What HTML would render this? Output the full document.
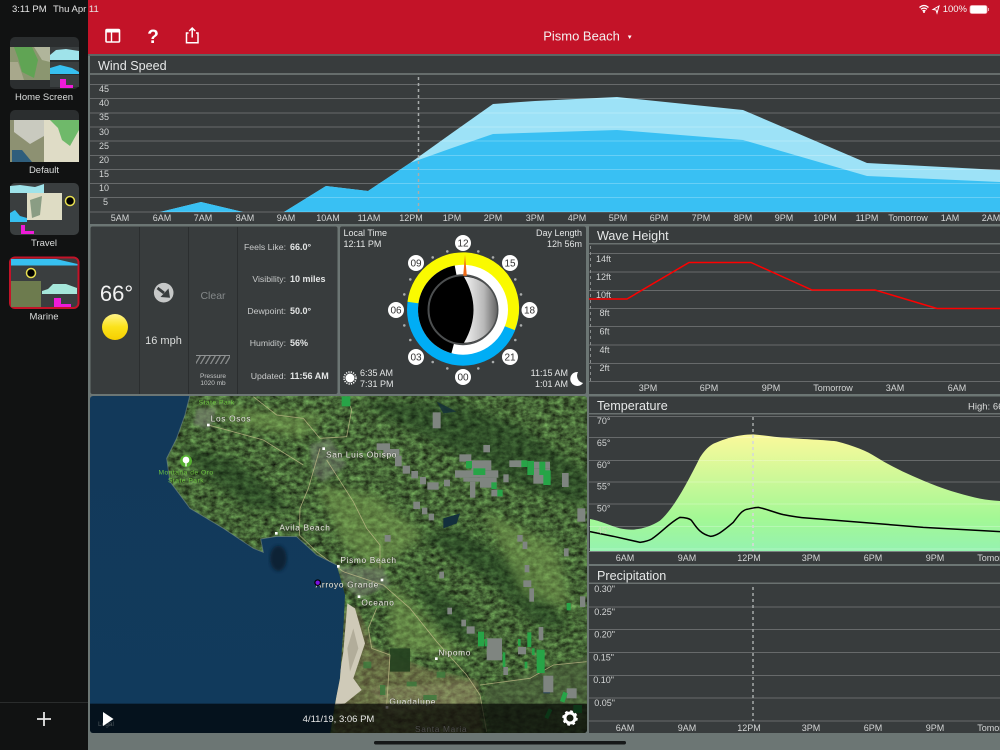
<!DOCTYPE html>
<html><head><meta charset="utf-8"><title>Marine</title>
<style>
html,body{margin:0;padding:0;background:#6c7674;width:1000px;height:750px;overflow:hidden}
svg{display:block}
text{font-family:"Liberation Sans",sans-serif;fill:#dcdedd}
.ax{font-size:9px;text-anchor:middle;fill:#d4d6d6}
.yl{font-size:9px;text-anchor:end;fill:#d4d6d6}
.tt{font-size:12.6px;fill:#e6e8e8}
.g{stroke:#fff;stroke-opacity:.24;stroke-width:1;fill:none}
.lb{font-size:8.7px;text-anchor:end;fill:#c8caca}
.vl{font-size:9px;font-weight:bold;fill:#e4e6e6}
.num{font-size:10px;text-anchor:middle;fill:#333}
.sm{font-size:9px;fill:#e4e6e6}
.mp{font-size:25px;fill:#e8e8e0;letter-spacing:2px;paint-order:stroke;stroke:#3a3f34;stroke-width:3px;stroke-opacity:.45}
</style></head><body>
<svg width="1000" height="750" viewBox="0 0 1000 750" xmlns="http://www.w3.org/2000/svg">
<defs>
<linearGradient id="tg" x1="0" y1="0" x2="0" y2="1"><stop offset="0" stop-color="#fbf99b"/><stop offset=".72" stop-color="#a3f895"/><stop offset="1" stop-color="#95f2b0"/></linearGradient>
<linearGradient id="sea" x1="0" y1="0" x2="0" y2="1"><stop offset="0" stop-color="#12395a"/><stop offset="1" stop-color="#113a5c"/></linearGradient>
<linearGradient id="moon" x1="0" y1="0" x2="1" y2="0"><stop offset="0" stop-color="#f2f2f2"/><stop offset=".6" stop-color="#b8b8b8"/><stop offset="1" stop-color="#666"/></linearGradient>
<linearGradient id="sun" x1="0" y1="0" x2="0" y2="1"><stop offset="0" stop-color="#fff48a"/><stop offset=".5" stop-color="#fbe21a"/><stop offset="1" stop-color="#f6cf00"/></linearGradient>
<filter id="terrain" x="0" y="0" width="100%" height="100%" color-interpolation-filters="sRGB">
<feTurbulence type="fractalNoise" baseFrequency=".05 .07" numOctaves="4" seed="8"/>
<feColorMatrix type="matrix" values=".5 0 0 0 .02  .75 0 0 0 .02  .4 0 0 0 .01  0 0 0 0 1"/>
</filter>
<filter id="b8"><feGaussianBlur stdDeviation="14"/></filter>
<filter id="b3"><feGaussianBlur stdDeviation="5"/></filter>
<filter id="b1"><feGaussianBlur stdDeviation="1"/></filter>
<clipPath id="land"><path d="M300 0L285 60L260 130L230 190L240 260L300 340L400 400L490 460L520 472L512 432L560 424L620 425L680 480L740 510L765 600L760 700L750 850L735 925L720 1020L1500 1020L1500 0Z"/></clipPath>
<clipPath id="farm"><path d="M800 640L850 760L1000 820L1160 860L1180 1020H730L750 850L770 640Z"/></clipPath>
<clipPath id="mapc"><rect x="0" y="0" width="497" height="337" rx="3"/></clipPath>
<pattern id="hatch" width="5" height="8" patternUnits="userSpaceOnUse" patternTransform="skewX(-30)"><rect width="1.4" height="8" fill="#8d9090"/></pattern>
</defs>

<!-- sidebar -->
<rect x="0" y="0" width="88" height="750" fill="#111212"/>
<rect x="88" y="0" width="912" height="54" fill="#c31328"/>
<rect x="88" y="54" width="912" height="2" fill="#5d6664"/>
<text x="12" y="12" style="font-size:9.5px;fill:#e6e6e6">3:11 PM</text>
<text x="53" y="12" style="font-size:9.5px;fill:#e6e6e6">Thu Apr 11</text>
<text x="967" y="12" text-anchor="end" style="font-size:9.5px;fill:#f5f5f5">100%</text>
<path d="M919.5 7.5Q924 3.5 928.5 7.5M921 9.3Q924 6.8 927 9.3M922.5 11Q924 9.8 925.5 11" stroke="#fff" stroke-width="1.3" fill="none"/><circle cx="924" cy="12" r="1" fill="#fff"/>
<path d="M939 6L933 9.5L936 10L937 13Z" fill="none" stroke="#fff" stroke-width="1"/>
<rect x="970" y="5.5" width="17" height="8" rx="2" fill="#fff" stroke="#f3b5bd" stroke-width=".8"/><rect x="988" y="8" width="1" height="3" fill="#e7a3ab"/>

<!-- header icons -->
<rect x="106" y="29.5" width="13.5" height="12.5" rx="1" fill="none" stroke="#fff" stroke-width="1.6"/><rect x="106" y="29.5" width="13.5" height="3" fill="#fff"/><path d="M111.5 30V42" stroke="#fff" stroke-width="1.4"/>
<text x="153" y="43" text-anchor="middle" style="font-size:19px;font-weight:bold;fill:#fff">?</text>
<path d="M188.5 33H186.5V42.8H198V33H196M192.2 37.5V28.5M189.2 31L192.2 28L195.2 31" fill="none" stroke="#fff" stroke-width="1.5"/>
<text x="581.500" y="40.500" text-anchor="middle" style="font-size:13px;fill:#f4f0f0">Pismo Beach</text>
<path d="M627.8 35.5H631.6L629.7 39Z" fill="#fff"/>

<!-- thumbnails -->
<g>
<rect x="10" y="37" width="69" height="52" rx="5" fill="#2b2e2f"/>
<rect x="10" y="47" width="40" height="33" fill="#8b9670"/>
<path d="M14 47L32 47L38 60L34 78L22 72L18 58Z" fill="#55a84d" opacity=".8"/><path d="M10 62L18 62L24 80H10Z" fill="#a8a88c"/><path d="M34 47H50V62L42 60Z" fill="#b0b59b"/>
<rect x="50" y="47" width="29" height="13" fill="#3a3f40"/><path d="M50 60V55L56 50L66 49L79 51V60Z" fill="#9fe3ea"/>
<rect x="50" y="62" width="29" height="12" fill="#3a3f40"/><path d="M50 74V68L60 65L72 68L79 72V74Z" fill="#37c0f0"/>
<rect x="50" y="75" width="29" height="12" fill="#3a3f40"/>
<rect x="60" y="79" width="6" height="9" fill="#ee1bd8"/><rect x="66" y="85" width="7" height="3" fill="#ee1bd8"/>
<text x="44" y="100" text-anchor="middle" style="font-size:9.5px">Home Screen</text>

<rect x="10" y="110" width="69" height="52" rx="5" fill="#2b2e2f"/>
<rect x="10" y="120" width="34" height="42" fill="#8d9172"/><path d="M14 120H44V136L30 144L14 132Z" fill="#c9cabf"/><path d="M12 150L22 150L32 162H12Z" fill="#2f5e7c"/>
<rect x="44" y="120" width="35" height="42" fill="#dfdcc6"/><path d="M50 120H79V130L70 146L62 140L58 128Z" fill="#6fb96a"/>
<text x="44" y="173" text-anchor="middle" style="font-size:9.5px">Default</text>

<rect x="10" y="183" width="69" height="52" rx="5" fill="#3a3e3f"/>
<path d="M10 186L20 185L35 187L44 184V193H10Z" fill="#9fe3ea"/>
<rect x="27" y="193" width="35" height="27" fill="#dedcc4"/><path d="M30 200L42 196L40 215L32 218Z" fill="#8a9d84"/>
<circle cx="70" cy="201" r="4.500" fill="#000" stroke="#e7df50" stroke-width="1.500"/>
<path d="M10 222V213L15 210L20 216L27 218V222Z" fill="#37c0f0"/>
<rect x="21" y="225" width="4" height="9" fill="#ee1bd8"/><rect x="25" y="231" width="9" height="3" fill="#ee1bd8"/>
<text x="44" y="246" text-anchor="middle" style="font-size:9.5px">Travel</text>

<rect x="10" y="257.500" width="68.500" height="50.500" rx="5" fill="#3a3e3f" stroke="#c31328" stroke-width="2"/>
<path d="M11 259H56L77.500 264V265.500H11Z" fill="#37c0f0"/>
<rect x="11" y="281" width="30" height="26" fill="#6d7b4e"/><circle cx="31" cy="273" r="4.500" fill="#000" stroke="#e7df50" stroke-width="1.500"/>
<path d="M42 294V291L48 289L53 284L66 284L77 288V294Z" fill="#a5e7da"/>
<rect x="54" y="298" width="7" height="9" fill="#ee1bd8"/><rect x="61" y="304" width="10" height="3" fill="#ee1bd8"/>
<text x="44" y="319.500" text-anchor="middle" style="font-size:9.5px">Marine</text>
</g>
<path d="M0 702.500H88" stroke="#2a2c2c"/>
<path d="M37 719H51M44 712V726" stroke="#e6e6e6" stroke-width="1.8"/>

<!-- wind panel -->
<rect x="90" y="56" width="910" height="168" fill="#383c3d"/>
<rect x="90" y="73" width="910" height="2" fill="#666d6c"/>
<text x="98" y="70" class="tt">Wind Speed</text>
<path d="M160 212L201 202L243 212ZM284 212L326 186L368 191L410 163L452 133L493 104L535 101L617 97L743 110L867 163L1000 170V212Z" fill="#9de2f7"/>
<path d="M160 212L201 202L243 212ZM284 212L326 186L368 191L410 163L452 148L493 134L617 130L743 140L867 176L1000 182V212Z" fill="#39c0f3"/>
<path class="g" d="M90 84.500H1000M90 98.500H1000M90 113H1000M90 127H1000M90 141H1000M90 155.500H1000M90 169.500H1000M90 183.500H1000M90 197.500H1000M90 212H1000" />
<path d="M418.500 77V212" stroke="#a8acac" stroke-width="1.500" stroke-dasharray="3 3"/>
<text x="109" y="92" class="yl">45</text><text x="109" y="106" class="yl">40</text><text x="109" y="120" class="yl">35</text><text x="109" y="135" class="yl">30</text><text x="109" y="149" class="yl">25</text><text x="109" y="163" class="yl">20</text><text x="109" y="177" class="yl">15</text><text x="109" y="191" class="yl">10</text><text x="108" y="205" class="yl">5</text>
<text class="ax" x="120" y="221">5AM</text><text class="ax" x="162" y="221">6AM</text><text class="ax" x="203" y="221">7AM</text><text class="ax" x="245" y="221">8AM</text><text class="ax" x="286" y="221">9AM</text><text class="ax" x="328" y="221">10AM</text><text class="ax" x="369" y="221">11AM</text><text class="ax" x="411" y="221">12PM</text><text class="ax" x="452" y="221">1PM</text><text class="ax" x="493" y="221">2PM</text><text class="ax" x="535" y="221">3PM</text><text class="ax" x="577" y="221">4PM</text><text class="ax" x="618" y="221">5PM</text><text class="ax" x="659" y="221">6PM</text><text class="ax" x="701" y="221">7PM</text><text class="ax" x="743" y="221">8PM</text><text class="ax" x="784" y="221">9PM</text><text class="ax" x="825" y="221">10PM</text><text class="ax" x="867" y="221">11PM</text><text class="ax" x="908" y="221">Tomorrow</text><text class="ax" x="950" y="221">1AM</text><text class="ax" x="991" y="221">2AM</text>

<!-- current conditions -->
<rect x="90.500" y="226.500" width="247" height="167.500" rx="2" fill="#383c3d"/>
<path d="M139.500 227V394M188.500 227V394M237.500 227V394" stroke="#2b2e2f"/>
<text x="116.500" y="301" text-anchor="middle" style="font-size:22px;fill:#f2f2f2">66°</text>
<circle cx="115" cy="327" r="13" fill="url(#sun)"/>
<circle cx="163.700" cy="292.700" r="9.800" fill="#c6c8c8"/>
<path d="M157.500 288L164 293" stroke="#383c3d" stroke-width="2.800"/>
<path d="M170 297.800L160.500 297L168.500 288.500Z" fill="#383c3d"/>
<text x="163.500" y="344" text-anchor="middle" style="font-size:11px">16 mph</text>
<text x="213" y="299" text-anchor="middle" style="font-size:10.500px;fill:#85898a">Clear</text>
<rect x="196" y="355" width="34" height="1" fill="#909393"/>
<rect x="196" y="356" width="34" height="8" fill="url(#hatch)"/>
<text x="213" y="378" text-anchor="middle" style="font-size:6.500px;fill:#c4c6c6">Pressure</text>
<text x="213" y="385" text-anchor="middle" style="font-size:6.500px;fill:#c4c6c6">1020 mb</text>
<text class="lb" x="286" y="250">Feels Like:</text><text class="vl" x="290" y="250">66.0°</text>
<text class="lb" x="286" y="282">Visibility:</text><text class="vl" x="290" y="282">10 miles</text>
<text class="lb" x="286" y="314">Dewpoint:</text><text class="vl" x="290" y="314">50.0°</text>
<text class="lb" x="286" y="346">Humidity:</text><text class="vl" x="290" y="346">56%</text>
<text class="lb" x="286" y="379">Updated:</text><text class="vl" x="290" y="379">11:56 AM</text>

<!-- clock -->
<rect x="340" y="226.500" width="246" height="167.500" rx="2" fill="#383c3d"/>
<text class="sm" x="343.500" y="236">Local Time</text><text class="sm" x="343.500" y="247">12:11 PM</text>
<text class="sm" x="582" y="236" text-anchor="end">Day Length</text><text class="sm" x="582" y="247" text-anchor="end">12h 56m</text>
<g transform="translate(463 309.700)">
<circle r="56" fill="#00adf5"/>
<path d="M-55.500 -8A56 56 0 1 1 51.700 20.400L0 0Z" fill="#fafa00"/>
<circle r="45" fill="#fff"/>
<path d="M-8.300 -44.200A45 45 0 0 0 -11.600 43.500L0 0Z" fill="#000"/>
<circle r="34.500" fill="#000" stroke="#4c4f50" stroke-width="2"/>
<path d="M1 -33A33 33 0 0 1 1 33Q20 0 1 -33Z" fill="url(#moon)"/>
<path d="M2 -55L.2 -34H3.800Z" fill="#f06a16"/>
<g fill="#a8abab"><circle cx="-15.700" cy="-58.300" r="1.300"/><circle cx="15.300" cy="-58.300" r="1.300"/><circle cx="30" cy="-52.300" r="1.300"/><circle cx="52.300" cy="-30.300" r="1.300"/><circle cx="58" cy="-15.300" r="1.300"/><circle cx="58" cy="15.700" r="1.300"/><circle cx="52.300" cy="30.300" r="1.300"/><circle cx="30" cy="52.300" r="1.300"/><circle cx="15.300" cy="58.700" r="1.300"/><circle cx="-15.700" cy="58.700" r="1.300"/><circle cx="-30.300" cy="52.300" r="1.300"/><circle cx="-52.700" cy="30.300" r="1.300"/><circle cx="-58.700" cy="15.700" r="1.300"/><circle cx="-58.700" cy="-15.300" r="1.300"/><circle cx="-52.700" cy="-30.300" r="1.300"/><circle cx="-30.300" cy="-52.300" r="1.300"/></g>
</g>
<g fill="#fff"><circle cx="463" cy="243" r="8"/><circle cx="510" cy="263" r="8"/><circle cx="529.500" cy="310" r="8"/><circle cx="510" cy="357" r="8"/><circle cx="463" cy="377" r="8"/><circle cx="416" cy="357" r="8"/><circle cx="396" cy="310" r="8"/><circle cx="416" cy="263" r="8"/></g>
<text class="num" x="463" y="246.500">12</text><text class="num" x="510" y="266.500">15</text><text class="num" x="529.500" y="313.500">18</text><text class="num" x="510" y="360.500">21</text><text class="num" x="463" y="380.500">00</text><text class="num" x="416" y="360.500">03</text><text class="num" x="396" y="313.500">06</text><text class="num" x="416" y="266.500">09</text>
<circle cx="350" cy="378" r="4.500" fill="#fff"/><circle cx="350" cy="378" r="6" fill="none" stroke="#fff" stroke-width="1.500" stroke-dasharray="1.200 1.200"/>
<text class="sm" x="360" y="376">6:35 AM</text><text class="sm" x="360" y="387">7:31 PM</text>
<text class="sm" x="568" y="376" text-anchor="end">11:15 AM</text><text class="sm" x="568" y="387" text-anchor="end">1:01 AM</text>
<path d="M578 372A7 7 0 1 0 583 383A7.500 7.500 0 0 1 578 372Z" fill="#fff"/>

<!-- wave -->
<rect x="589" y="226.500" width="411" height="167.500" fill="#383c3d"/>
<rect x="589" y="243" width="411" height="1.500" fill="#6a7170"/>
<text x="597" y="240" class="tt">Wave Height</text>
<path class="g" d="M589 253.500H1000M589 272H1000M589 290.500H1000M589 308.500H1000M589 326.500H1000M589 345H1000M589 363.500H1000M589 381.500H1000"/>
<path d="M590.500 246V381" stroke="#888c8c" stroke-dasharray="3 3"/>
<text class="yl" x="611" y="262">14ft</text><text class="yl" x="611" y="280">12ft</text><text class="yl" x="611" y="298">10ft</text><text class="yl" x="609.500" y="316">8ft</text><text class="yl" x="609.500" y="334.500">6ft</text><text class="yl" x="609.500" y="353">4ft</text><text class="yl" x="609.500" y="371">2ft</text>
<path d="M589 299H627L689 262.500H751L812 290H875L937 308.500H1000" fill="none" stroke="#f00" stroke-width="1.500"/>
<text class="ax" x="648" y="391">3PM</text><text class="ax" x="709" y="391">6PM</text><text class="ax" x="771" y="391">9PM</text><text class="ax" x="833" y="391">Tomorrow</text><text class="ax" x="895" y="391">3AM</text><text class="ax" x="957" y="391">6AM</text>

<!-- temperature -->
<rect x="589" y="396.500" width="411" height="167.500" fill="#383c3d"/>
<rect x="589" y="413" width="411" height="1.500" fill="#6a7170"/>
<text x="597" y="410" class="tt">Temperature</text>
<text x="968" y="409.500" style="font-size:9.500px">High: 66°</text>
<g transform="translate(590 224) scale(.33333)">
<path d="M0 885C30 890 60 905 90 913C130 922 170 915 210 890C250 855 290 780 330 700C350 670 365 660 380 655C410 643 440 632 490 631C530 635 560 640 580 641C650 646 700 648 740 652C790 665 830 680 860 700C900 725 950 750 1020 778C1080 802 1130 815 1170 824C1190 828 1210 830 1230 831V982H0Z" fill="url(#tg)"/>
</g>
<path class="g" d="M589 416.500H1000M589 437.500H1000M589 460.500H1000M589 482H1000M589 504H1000M589 526.500H1000M589 549H1000"/>
<path d="M589 551.500H1000" stroke="#7b8281" stroke-width="1"/>
<path d="M753 417V551" stroke="#a5a9a9" stroke-width="1.500" stroke-dasharray="3 3"/>
<path d="M753 435V551" stroke="#fff" stroke-opacity=".6" stroke-width="1.500" stroke-dasharray="3 3"/>
<g transform="translate(590 224) scale(.33333)">
<path d="M0 923L70 937L150 955C165 953 175 951 185 945C215 925 240 895 270 880C285 880 300 884 305 890C318 908 330 930 362 937C380 935 395 925 430 895C445 875 455 860 470 856C485 853 495 850 505 850C530 855 555 866 580 872C610 878 630 881 650 882C700 887 800 895 1000 910L1230 923" fill="none" stroke="#000" stroke-width="4.500"/>
</g>
<text class="yl" x="610.500" y="424">70°</text><text class="yl" x="610.500" y="446">65°</text><text class="yl" x="610.500" y="468">60°</text><text class="yl" x="610.500" y="489.500">55°</text><text class="yl" x="610.500" y="511.500">50°</text><text x="610.500" y="533.500" style="font-size:9px;text-anchor:end;fill:#c8e2b8">45°</text>
<text class="ax" x="625" y="561">6AM</text><text class="ax" x="687" y="561">9AM</text><text class="ax" x="749" y="561">12PM</text><text class="ax" x="811" y="561">3PM</text><text class="ax" x="873" y="561">6PM</text><text class="ax" x="935" y="561">9PM</text><text class="ax" x="997" y="561">Tomorrow</text>

<!-- precipitation -->
<rect x="589" y="566" width="411" height="167" fill="#383c3d"/>
<rect x="589" y="582.500" width="411" height="1.500" fill="#6a7170"/>
<text x="597" y="580" class="tt">Precipitation</text>
<path class="g" d="M589 607H1000M589 629.500H1000M589 652.500H1000M589 675.500H1000M589 698H1000M589 721H1000"/>
<path d="M753 587V721" stroke="#a5a9a9" stroke-width="1.500" stroke-dasharray="3 3"/>
<text class="yl" x="615" y="592">0.30"</text><text class="yl" x="615" y="615">0.25"</text><text class="yl" x="615" y="637.500">0.20"</text><text class="yl" x="614" y="660.500">0.15"</text><text class="yl" x="614" y="683">0.10"</text><text class="yl" x="615" y="706">0.05"</text>
<text class="ax" x="625" y="731">6AM</text><text class="ax" x="687" y="731">9AM</text><text class="ax" x="749" y="731">12PM</text><text class="ax" x="811" y="731">3PM</text><text class="ax" x="873" y="731">6PM</text><text class="ax" x="935" y="731">9PM</text><text class="ax" x="997" y="731">Tomorrow</text>

<!-- map -->
<g transform="translate(90 396)">
<g clip-path="url(#mapc)">
<g transform="translate(0 -1) scale(.33333)">
<rect width="1500" height="1065" fill="url(#sea)"/>
<ellipse cx="565" cy="490" rx="25" ry="38" fill="#0a2436" filter="url(#b3)"/>
<g clip-path="url(#land)">
<rect width="1500" height="1065" filter="url(#terrain)"/>
<!-- forested ridges -->
<g fill="#1d3a1f" opacity=".5" filter="url(#b8)">
<path d="M800 20L1000 120L1250 260L1480 330L1500 240L1300 100L1100 20Z"/>
<path d="M990 420L1200 560L1340 690L1440 700L1300 520L1100 400Z"/>
<path d="M270 150L450 200L600 340L480 340L340 240Z"/>
<path d="M960 540L1130 640L1200 760L1050 700Z"/>
</g>
<g fill="#7ea352" opacity=".5" filter="url(#b8)">
<path d="M680 270L860 300L1000 420L860 530L760 450Z"/>
<path d="M1180 350L1400 450L1440 640L1300 600Z"/>
<path d="M320 30L700 60L640 130L480 100Z"/>
<path d="M900 560L1040 700L1120 790L900 760Z"/>
</g>
<!-- farmland -->
<g filter="url(#b3)">
<path d="M800 640L850 760L1000 820L1160 860L1180 1020H730L750 850L770 640Z" fill="#8c7654" opacity=".85"/>
<path d="M840 880L1150 860L1170 920L900 960Z" fill="#b2a07a" opacity=".7"/>
<path d="M1180 880L1500 780V1020H1200Z" fill="#4b5d3a" opacity=".6"/>
</g>
<g clip-path="url(#farm)"><rect width="1500" height="1065" filter="url(#terrain)" opacity=".45"/></g>
<path d="M900 760H960V830H900Z" fill="#24401f" opacity=".9"/>
<g fill="#3e7a3d" opacity=".85"><rect x="820" y="800" width="24" height="20"/><rect x="950" y="860" width="30" height="14"/><rect x="1040" y="830" width="26" height="18"/><rect x="870" y="870" width="16" height="30"/><rect x="1000" y="900" width="40" height="16"/></g>
<path d="M772 625L795 640L825 745L790 850L815 885L765 925L735 930L760 770Z" fill="#cfcab8" filter="url(#b1)"/>
<path d="M790 700L805 760L780 830L772 760Z" fill="#9f9a86" opacity=".6"/>
<path d="M660 150L720 130L770 210L700 260L670 240Z" fill="#787f73" opacity=".5" filter="url(#b3)"/>
<path d="M740 515L880 520L900 570L810 610L770 580Z" fill="#7b8374" opacity=".55" filter="url(#b3)"/>
<path d="M320 40L380 40L360 100L310 90Z" fill="#7d8476" opacity=".6" filter="url(#b3)"/>
<!-- roads -->
<g fill="none" stroke="#c5bd8c" stroke-opacity=".75" stroke-width="2.500">
<path d="M490 5L560 60L640 70L690 130L770 125L785 45L770 5"/>
<path d="M690 160L655 280L630 340L628 420L680 470L760 530L880 570L960 640L1040 740L1130 840L1170 900L1190 1010"/>
<path d="M710 195L790 320L830 400L870 450L870 520"/>
<path d="M355 90L520 135L640 210"/>
<path d="M860 640L835 700L845 760L900 780L890 930"/>
<path d="M1170 870L1320 850L1390 810L1490 800"/>
</g>
<path d="M1060 370L1110 355L1100 385L1060 400Z" fill="#132f3c"/>
<path d="M1040 20L1100 50L1060 55Z" fill="#14303a" opacity=".8"/>
<path d="M1360 850L1385 845L1380 895L1360 895Z" fill="#233f55"/>
<!-- radar pixels -->
<g fill="#7f8580">
<rect x="1028" y="52" width="24" height="48"/><rect x="1180" y="150" width="20" height="22"/><rect x="1108" y="178" width="36" height="22"/><rect x="1095" y="226" width="130" height="22"/><rect x="1144" y="196" width="60" height="30"/><rect x="1120" y="248" width="60" height="12"/><rect x="1140" y="260" width="16" height="48"/><rect x="1170" y="248" width="50" height="30"/><rect x="1204" y="284" width="30" height="20"/><rect x="1240" y="238" width="16" height="24"/><rect x="1258" y="196" width="50" height="20"/><rect x="1330" y="200" width="50" height="20"/><rect x="1330" y="220" width="50" height="46"/><rect x="1416" y="234" width="20" height="42"/>
<rect x="860" y="145" width="40" height="20"/><rect x="880" y="162" width="48" height="20"/><rect x="915" y="182" width="20" height="32"/><rect x="938" y="212" width="22" height="24"/><rect x="964" y="228" width="20" height="22"/><rect x="990" y="246" width="18" height="22"/><rect x="1012" y="262" width="34" height="22"/><rect x="1062" y="254" width="18" height="20"/><rect x="970" y="320" width="20" height="22"/><rect x="996" y="338" width="16" height="20"/><rect x="1016" y="356" width="16" height="20"/><rect x="884" y="420" width="18" height="20"/><rect x="1462" y="340" width="24" height="40"/><rect x="1282" y="420" width="16" height="20"/><rect x="1298" y="440" width="14" height="22"/><rect x="1422" y="460" width="14" height="24"/><rect x="1304" y="510" width="14" height="22"/><rect x="1300" y="556" width="24" height="20"/><rect x="1318" y="580" width="14" height="40"/><rect x="1048" y="530" width="14" height="20"/><rect x="1072" y="638" width="14" height="20"/><rect x="1114" y="674" width="14" height="20"/><rect x="1130" y="694" width="24" height="22"/><rect x="1190" y="730" width="46" height="66"/><rect x="1284" y="756" width="24" height="22"/><rect x="1240" y="816" width="14" height="24"/><rect x="1346" y="696" width="14" height="40"/><rect x="1470" y="604" width="16" height="32"/><rect x="1360" y="842" width="30" height="50"/><rect x="1430" y="880" width="30" height="30"/>
</g>
<g fill="#27a447">
<rect x="755" y="4" width="26" height="30"/><rect x="1128" y="198" width="18" height="22"/><rect x="1150" y="220" width="36" height="20"/><rect x="1204" y="262" width="16" height="20"/><rect x="1222" y="284" width="16" height="20"/><rect x="1294" y="196" width="18" height="20"/><rect x="1312" y="198" width="20" height="42"/><rect x="1348" y="200" width="18" height="40"/><rect x="1360" y="226" width="22" height="44"/>
<rect x="1164" y="710" width="18" height="44"/><rect x="1184" y="732" width="8" height="22"/><rect x="1238" y="772" width="8" height="44"/><rect x="1284" y="732" width="8" height="20"/><rect x="1312" y="712" width="12" height="44"/><rect x="1326" y="760" width="8" height="20"/><rect x="1340" y="764" width="24" height="70"/><rect x="1304" y="800" width="8" height="20"/><rect x="1430" y="624" width="12" height="22"/><rect x="1420" y="890" width="14" height="30" transform="rotate(20 1420 890)"/><rect x="1376" y="940" width="12" height="30" transform="rotate(25 1376 940)"/><rect x="1450" y="930" width="26" height="24"/>
</g>
</g>
<path d="M300 0L285 60L260 130L230 190L240 260L300 340L400 400L490 460L520 472L512 432L560 424L620 425L680 480L740 510" fill="none" stroke="#7c8f8a" stroke-width="3" stroke-opacity=".55"/>
<!-- labels -->
<g fill="#fff"><rect x="351" y="86" width="8" height="8"/><rect x="697" y="157" width="8" height="8"/><rect x="555" y="411" width="8" height="8"/><rect x="741" y="510" width="8" height="8"/><rect x="872" y="551" width="8" height="8"/><rect x="803" y="601" width="8" height="8"/><rect x="1035" y="787" width="8" height="8"/><rect x="887" y="933" width="8" height="8"/></g>
<text class="mp" x="362" y="80">Los Osos</text>
<text class="mp" x="708" y="188">San Luis Obispo</text>
<text class="mp" x="568" y="406">Avila Beach</text>
<text class="mp" x="751" y="504">Pismo Beach</text>
<text class="mp" x="677" y="577">Arroyo Grande</text>
<text class="mp" x="814" y="632">Oceano</text>
<text class="mp" x="1045" y="782">Nipomo</text>
<text class="mp" x="898" y="929">Guadalupe</text>
<text class="mp" x="975" y="1011">Santa Maria</text>
<circle cx="288" cy="198" r="18" fill="#55b030"/><path d="M288 214V198" stroke="#fff" stroke-width="4"/><circle cx="288" cy="195" r="10" fill="#fff"/>
<g style="font-size:20px;letter-spacing:1.500px" text-anchor="middle">
<text x="288" y="238" style="fill:#6cc23f">Montaña de Oro</text><text x="288" y="262" style="fill:#6cc23f">State Park</text>
<text x="380" y="28" style="fill:#6cc23f">State Park</text>
</g>
<circle cx="683" cy="563" r="10" fill="#000"/><circle cx="683" cy="563" r="6.500" fill="#7a12e0"/>
<rect x="0" y="926" width="1500" height="95" fill="#000" fill-opacity=".68"/>
</g>
</g>
</g>
<text x="98" y="726" style="font-size:6.500px;fill:#4c555a">Legal</text>
<path d="M103 712L113.500 719L103 726Z" fill="#fff"/>
<text x="338.500" y="722" text-anchor="middle" style="font-size:9.500px;fill:#e8e8e8">4/11/19, 3:06 PM</text>
<circle cx="570" cy="718" r="5" fill="none" stroke="#fff" stroke-width="3"/>
<circle cx="570" cy="718" r="6.500" fill="none" stroke="#fff" stroke-width="2.500" stroke-dasharray="2.600 2.500"/>
<rect x="374" y="741" width="252" height="3.500" rx="1.700" fill="#161818"/>
</svg>
</body></html>
